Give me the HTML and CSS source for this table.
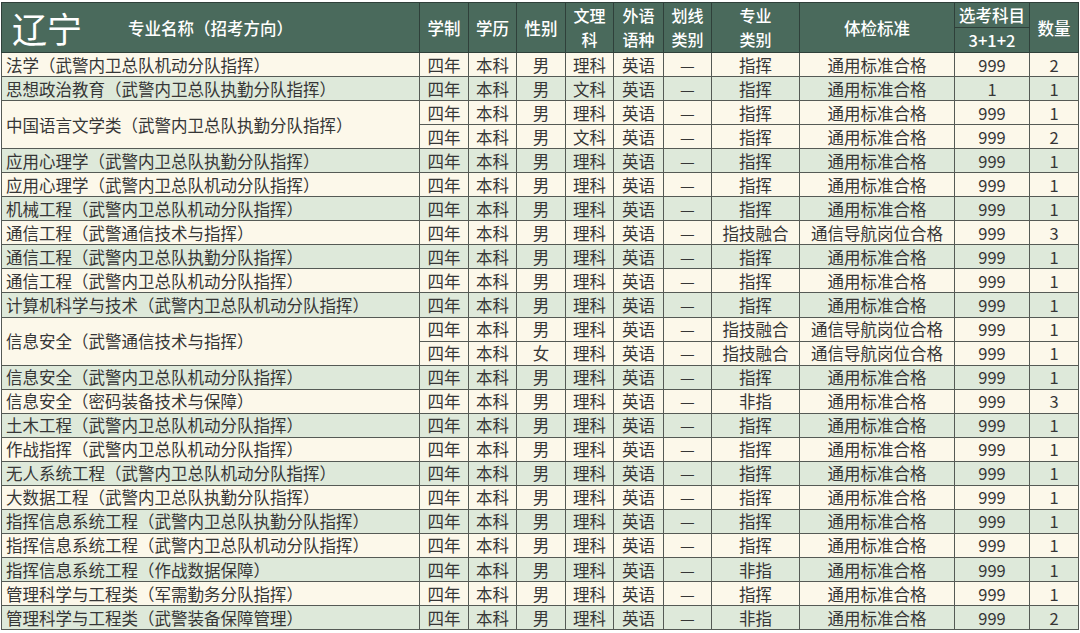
FILE: index.html
```html
<!DOCTYPE html>
<html lang="zh">
<head>
<meta charset="utf-8">
<link rel="stylesheet" href="styles.css">
</head>
<body>
<table class="tbl">
<colgroup>
<col class="w-name"><col class="w-a"><col class="w-b"><col class="w-c"><col class="w-d"><col class="w-e"><col class="w-f"><col class="w-g"><col class="w-h"><col class="w-i"><col class="w-j">
</colgroup>
<thead>
<tr class="h1">
<th rowspan="2" class="th-name"><span class="prov">辽宁</span>专业名称（招考方向）</th>
<th rowspan="2">学制</th>
<th rowspan="2">学历</th>
<th rowspan="2">性别</th>
<th rowspan="2" class="two">文理<br>科</th>
<th rowspan="2" class="two">外语<br>语种</th>
<th rowspan="2" class="two">划线<br>类别</th>
<th rowspan="2" class="two">专业<br>类别</th>
<th rowspan="2">体检标准</th>
<th>选考科目</th>
<th rowspan="2">数量</th>
</tr>
<tr class="h2"><th>3+1+2</th></tr>
</thead>
<tbody>
<tr class="c"><td class="nm">法学（武警内卫总队机动分队指挥）</td><td>四年</td><td>本科</td><td>男</td><td>理科</td><td>英语</td><td>—</td><td>指挥</td><td>通用标准合格</td><td>999</td><td>2</td></tr>
<tr class="g"><td class="nm">思想政治教育（武警内卫总队执勤分队指挥）</td><td>四年</td><td>本科</td><td>男</td><td>文科</td><td>英语</td><td>—</td><td>指挥</td><td>通用标准合格</td><td>1</td><td>1</td></tr>
<tr class="c"><td class="nm" rowspan="2">中国语言文学类（武警内卫总队执勤分队指挥）</td><td>四年</td><td>本科</td><td>男</td><td>理科</td><td>英语</td><td>—</td><td>指挥</td><td>通用标准合格</td><td>999</td><td>1</td></tr>
<tr class="c"><td>四年</td><td>本科</td><td>男</td><td>文科</td><td>英语</td><td>—</td><td>指挥</td><td>通用标准合格</td><td>999</td><td>2</td></tr>
<tr class="g"><td class="nm">应用心理学（武警内卫总队执勤分队指挥）</td><td>四年</td><td>本科</td><td>男</td><td>理科</td><td>英语</td><td>—</td><td>指挥</td><td>通用标准合格</td><td>999</td><td>1</td></tr>
<tr class="c"><td class="nm">应用心理学（武警内卫总队机动分队指挥）</td><td>四年</td><td>本科</td><td>男</td><td>理科</td><td>英语</td><td>—</td><td>指挥</td><td>通用标准合格</td><td>999</td><td>1</td></tr>
<tr class="g"><td class="nm">机械工程（武警内卫总队机动分队指挥）</td><td>四年</td><td>本科</td><td>男</td><td>理科</td><td>英语</td><td>—</td><td>指挥</td><td>通用标准合格</td><td>999</td><td>1</td></tr>
<tr class="c"><td class="nm">通信工程（武警通信技术与指挥）</td><td>四年</td><td>本科</td><td>男</td><td>理科</td><td>英语</td><td>—</td><td>指技融合</td><td>通信导航岗位合格</td><td>999</td><td>3</td></tr>
<tr class="g"><td class="nm">通信工程（武警内卫总队执勤分队指挥）</td><td>四年</td><td>本科</td><td>男</td><td>理科</td><td>英语</td><td>—</td><td>指挥</td><td>通用标准合格</td><td>999</td><td>1</td></tr>
<tr class="c"><td class="nm">通信工程（武警内卫总队机动分队指挥）</td><td>四年</td><td>本科</td><td>男</td><td>理科</td><td>英语</td><td>—</td><td>指挥</td><td>通用标准合格</td><td>999</td><td>1</td></tr>
<tr class="g"><td class="nm">计算机科学与技术（武警内卫总队机动分队指挥）</td><td>四年</td><td>本科</td><td>男</td><td>理科</td><td>英语</td><td>—</td><td>指挥</td><td>通用标准合格</td><td>999</td><td>1</td></tr>
<tr class="c"><td class="nm" rowspan="2">信息安全（武警通信技术与指挥）</td><td>四年</td><td>本科</td><td>男</td><td>理科</td><td>英语</td><td>—</td><td>指技融合</td><td>通信导航岗位合格</td><td>999</td><td>1</td></tr>
<tr class="c"><td>四年</td><td>本科</td><td>女</td><td>理科</td><td>英语</td><td>—</td><td>指技融合</td><td>通信导航岗位合格</td><td>999</td><td>1</td></tr>
<tr class="g"><td class="nm">信息安全（武警内卫总队机动分队指挥）</td><td>四年</td><td>本科</td><td>男</td><td>理科</td><td>英语</td><td>—</td><td>指挥</td><td>通用标准合格</td><td>999</td><td>1</td></tr>
<tr class="c"><td class="nm">信息安全（密码装备技术与保障）</td><td>四年</td><td>本科</td><td>男</td><td>理科</td><td>英语</td><td>—</td><td>非指</td><td>通用标准合格</td><td>999</td><td>3</td></tr>
<tr class="g"><td class="nm">土木工程（武警内卫总队机动分队指挥）</td><td>四年</td><td>本科</td><td>男</td><td>理科</td><td>英语</td><td>—</td><td>指挥</td><td>通用标准合格</td><td>999</td><td>1</td></tr>
<tr class="c"><td class="nm">作战指挥（武警内卫总队机动分队指挥）</td><td>四年</td><td>本科</td><td>男</td><td>理科</td><td>英语</td><td>—</td><td>指挥</td><td>通用标准合格</td><td>999</td><td>1</td></tr>
<tr class="g"><td class="nm">无人系统工程（武警内卫总队机动分队指挥）</td><td>四年</td><td>本科</td><td>男</td><td>理科</td><td>英语</td><td>—</td><td>指挥</td><td>通用标准合格</td><td>999</td><td>1</td></tr>
<tr class="c"><td class="nm">大数据工程（武警内卫总队执勤分队指挥）</td><td>四年</td><td>本科</td><td>男</td><td>理科</td><td>英语</td><td>—</td><td>指挥</td><td>通用标准合格</td><td>999</td><td>1</td></tr>
<tr class="g"><td class="nm">指挥信息系统工程（武警内卫总队执勤分队指挥）</td><td>四年</td><td>本科</td><td>男</td><td>理科</td><td>英语</td><td>—</td><td>指挥</td><td>通用标准合格</td><td>999</td><td>1</td></tr>
<tr class="c"><td class="nm">指挥信息系统工程（武警内卫总队机动分队指挥）</td><td>四年</td><td>本科</td><td>男</td><td>理科</td><td>英语</td><td>—</td><td>指挥</td><td>通用标准合格</td><td>999</td><td>1</td></tr>
<tr class="g"><td class="nm">指挥信息系统工程（作战数据保障）</td><td>四年</td><td>本科</td><td>男</td><td>理科</td><td>英语</td><td>—</td><td>非指</td><td>通用标准合格</td><td>999</td><td>1</td></tr>
<tr class="c"><td class="nm">管理科学与工程类（军需勤务分队指挥）</td><td>四年</td><td>本科</td><td>男</td><td>理科</td><td>英语</td><td>—</td><td>指挥</td><td>通用标准合格</td><td>999</td><td>1</td></tr>
<tr class="g"><td class="nm">管理科学与工程类（武警装备保障管理）</td><td>四年</td><td>本科</td><td>男</td><td>理科</td><td>英语</td><td>—</td><td>非指</td><td>通用标准合格</td><td>999</td><td>2</td></tr>
</tbody>
</table>
</body>
</html>
```
FILE: styles.css
```css
html, body {
  margin: 0;
  padding: 0;
  background: #ffffff;
}
body {
  padding: 2px 0 0 1px;
  font-family: "Noto Sans CJK SC", "Noto Sans", sans-serif;
}
.tbl {
  border-collapse: collapse;
  table-layout: fixed;
  width: 1077px;
  border: 1px solid #4a4a4a;
}
.w-name { width: 418px; }
.w-a { width: 49px; }
.w-b { width: 48px; }
.w-c { width: 49px; }
.w-d { width: 48px; }
.w-e { width: 50px; }
.w-f { width: 48px; }
.w-g { width: 88px; }
.w-h { width: 155px; }
.w-i { width: 75px; }
.w-j { width: 49px; }

.tbl th {
  background: #4a6a5c;
  color: #ffffff;
  font-weight: 500;
  font-size: 16.5px;
  line-height: 20px;
  border: 1px solid #2f403a;
  padding: 0;
  text-align: center;
  vertical-align: middle;
}
.tbl th.two {
  font-size: 16px;
  line-height: 23.3px;
}
.h1 th { height: 24px; }
.h2 th { height: 24px; }
.th-name {
  position: relative;
}
.prov {
  position: absolute;
  left: 10px;
  top: 3px;
  font-size: 35px;
  line-height: 44px;
  font-weight: 400;
  color: #ffffff;
}
.tbl td {
  border: 1px solid #555a55;
  padding: 0;
  height: 23.05px;
  font-size: 16.5px;
  line-height: 20px;
  color: #363636;
  text-align: center;
  vertical-align: middle;
  white-space: nowrap;
}
.tbl td.nm {
  text-align: left;
  padding-left: 4px;
}
.c td { background: #fcf8ea; }
.g td { background: #dee9da; }
```
